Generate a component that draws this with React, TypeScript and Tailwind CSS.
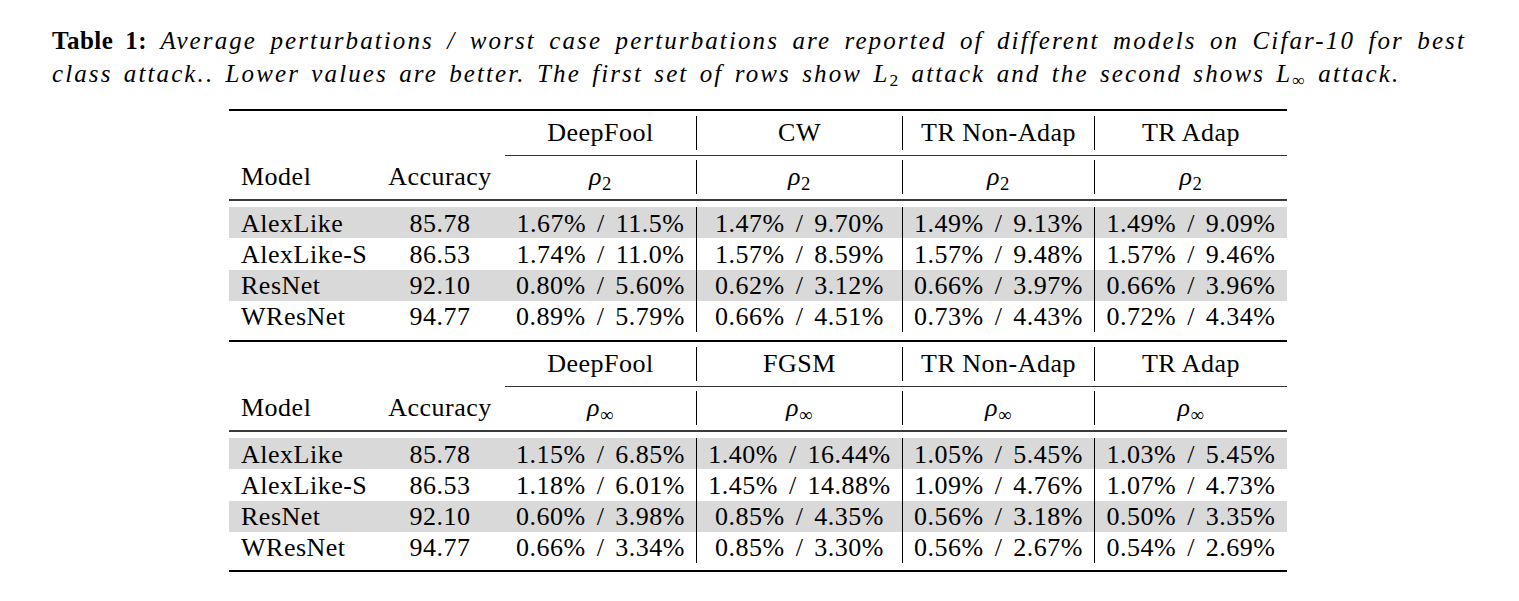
const rowsL2 = [
  ['AlexLike', '85.78', '1.67% / 11.5%', '1.47% / 9.70%', '1.49% / 9.13%', '1.49% / 9.09%'],
  ['AlexLike-S', '86.53', '1.74% / 11.0%', '1.57% / 8.59%', '1.57% / 9.48%', '1.57% / 9.46%'],
  ['ResNet', '92.10', '0.80% / 5.60%', '0.62% / 3.12%', '0.66% / 3.97%', '0.66% / 3.96%'],
  ['WResNet', '94.77', '0.89% / 5.79%', '0.66% / 4.51%', '0.73% / 4.43%', '0.72% / 4.34%'],
]

const rowsLinf = [
  ['AlexLike', '85.78', '1.15% / 6.85%', '1.40% / 16.44%', '1.05% / 5.45%', '1.03% / 5.45%'],
  ['AlexLike-S', '86.53', '1.18% / 6.01%', '1.45% / 14.88%', '1.09% / 4.76%', '1.07% / 4.73%'],
  ['ResNet', '92.10', '0.60% / 3.98%', '0.85% / 4.35%', '0.56% / 3.18%', '0.50% / 3.35%'],
  ['WResNet', '94.77', '0.66% / 3.34%', '0.85% / 3.30%', '0.56% / 2.67%', '0.54% / 2.69%'],
]

const grid = 'grid grid-cols-[146px_130px_192px_206px_192px_192px]'

function Rho({ sub }: { sub: string }) {
  return (
    <span>
      <i>ρ</i>
      <sub className="text-[72%]">{sub}</sub>
    </span>
  )
}

function Block({ attacks, sub, rows }: { attacks: string[]; sub: string; rows: string[][] }) {
  return (
    <>
      {/* header: attack names */}
      <div className={`${grid} mt-[5px] h-[34px]`}>
        <div />
        <div />
        {attacks.map((a, i) => (
          <div key={a + i} className={`flex items-center justify-center ${i < 3 ? 'border-r border-black' : ''}`}>
            {a}
          </div>
        ))}
      </div>
      {/* cmidrule */}
      <div className="mt-[5px] ml-[276px] h-px bg-[#333]" />
      {/* header: model / accuracy / rho */}
      <div className={`${grid} mt-[4px] h-[34px]`}>
        <div className="flex items-center pl-3">Model</div>
        <div className="flex items-center justify-center">Accuracy</div>
        {[0, 1, 2, 3].map((i) => (
          <div key={i} className={`flex items-center justify-center ${i < 3 ? 'border-r border-black' : ''}`}>
            <Rho sub={sub} />
          </div>
        ))}
      </div>
      {/* midrule */}
      <div className="mt-[5px] h-[2px] bg-[#3a3a3a]" />
      <div className="mt-[6px]">
        {rows.map((r, ri) => (
          <div key={r[0]} className={`${grid} h-[31.25px] ${ri % 2 === 0 ? 'bg-[#d9d9d9]' : ''}`}>
            <div className="flex items-center pl-3 pt-[2px] whitespace-nowrap">{r[0]}</div>
            <div className="flex items-center justify-center pt-[2px]">{r[1]}</div>
            {r.slice(2).map((v, i) => (
              <div
                key={i}
                className={`flex items-center justify-center pt-[2px] whitespace-nowrap [word-spacing:4px] ${i < 3 ? 'border-r border-black' : ''}`}
              >
                {v}
              </div>
            ))}
          </div>
        ))}
      </div>
    </>
  )
}

export default function App() {
  return (
    <div className="w-[1519px] h-[601px] bg-white text-black font-['Liberation_Serif',serif] overflow-hidden">
      {/* Caption */}
      <div className="ml-[52px] pt-[25px] w-[1414px] text-[25px] leading-[32.5px] tracking-[2.1px] [word-spacing:3px]">
        <div className="text-justify [text-align-last:justify] whitespace-nowrap">
          <b className="tracking-[0.5px]">Table 1:</b>{' '}
          <i>
            Average perturbations / worst case perturbations are reported of different models on Cifar-10 for best
          </i>
        </div>
        <div className="italic whitespace-nowrap">
          class attack.. Lower values are better. The first set of rows show <i>L</i>
          <sub className="not-italic text-[70%]">2</sub> attack and the second shows <i>L</i>
          <sub className="not-italic text-[70%]">∞</sub> attack.
        </div>
      </div>

      {/* Table */}
      <div className="ml-[229px] mt-[19px] w-[1058px] text-[26px] leading-none tracking-[0.5px]">
        <div className="h-[2px] bg-black" />
        <Block attacks={['DeepFool', 'CW', 'TR Non-Adap', 'TR Adap']} sub="2" rows={rowsL2} />
        <div className="mt-[8px] h-[2px] bg-black" />
        <Block attacks={['DeepFool', 'FGSM', 'TR Non-Adap', 'TR Adap']} sub="∞" rows={rowsLinf} />
        <div className="mt-[7px] h-[2px] bg-black" />
      </div>
    </div>
  )
}
